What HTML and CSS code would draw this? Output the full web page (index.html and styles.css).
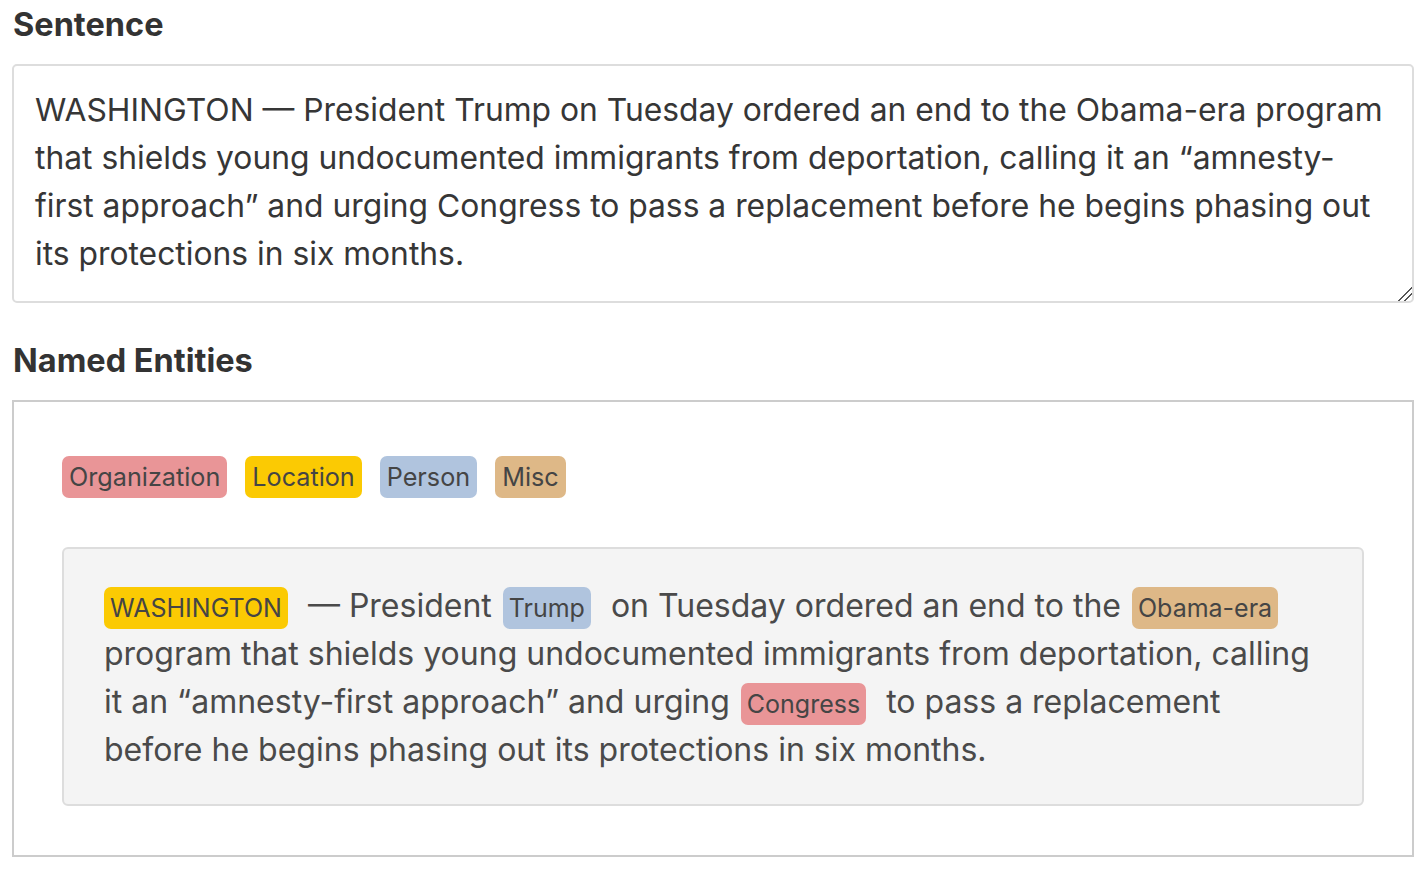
FILE: index.html
```html
<!DOCTYPE html>
<html lang="en">
<head>
<meta charset="utf-8">
<title>Named Entities</title>
<link rel="stylesheet" href="styles.css">
</head>
<body>
<main class="page">
  <h2 class="section-title">Sentence</h2>
  <textarea class="sentence-input">WASHINGTON — President Trump on Tuesday ordered an end to the Obama-era program that shields young undocumented immigrants from deportation, calling it an “amnesty-first approach” and urging Congress to pass a replacement before he begins phasing out its protections in six months.</textarea>

  <h2 class="section-title section-title--second">Named Entities</h2>
  <section class="entities">
    <div class="legend">
      <span class="tag tag--org">Organization</span>
      <span class="tag tag--loc">Location</span>
      <span class="tag tag--per">Person</span>
      <span class="tag tag--misc">Misc</span>
    </div>
    <div class="result">
      <span class="ent tag--loc">WASHINGTON</span> — President <span class="ent tag--per">Trump</span> on Tuesday ordered an end to the <span class="ent tag--misc">Obama-era</span> program that shields young undocumented immigrants from deportation, calling it an “amnesty-first approach” and urging <span class="ent tag--org">Congress</span> to pass a replacement before he begins phasing out its protections in six months.
    </div>
  </section>
</main>
</body>
</html>
```

FILE: styles.css
```css
* { box-sizing: border-box; }

html, body {
  margin: 0;
  padding: 0;
  background: #ffffff;
}

body {
  font-family: Inter, "Noto Sans", "Liberation Sans", sans-serif;
  color: #404040;
}

.page {
  padding: 0 12px;
}

.section-title {
  font-size: 32.5px;
  font-weight: 700;
  line-height: 36px;
  color: #333333;
  margin: 7px 0 21px 1px;
}

.section-title--second {
  margin-top: 40px;
}

.sentence-input {
  display: block;
  width: 100%;
  height: 239px;
  margin: 0;
  padding: 20px 24px 20px 21px;
  border: 2px solid #dddddd;
  border-radius: 5px;
  font-family: inherit;
  font-size: 31.8px;
  line-height: 48px;
  color: #363636;
  background: #ffffff;
  resize: both;
  outline: none;
}

.sentence-input::-webkit-resizer {
  background: linear-gradient(135deg,
    transparent 0 52%,
    #555555 52% 58%,
    transparent 58% 72%,
    #555555 72% 78%,
    transparent 78%);
}

.entities {
  border: 2px solid #cccccc;
  padding: 54px 48px 49px;
}

.legend {
  display: flex;
  gap: 18px;
  margin-bottom: 49px;
}

.tag {
  display: inline-block;
  height: 42px;
  padding: 0 7px;
  border-radius: 7px;
  font-size: 25.2px;
  line-height: 42px;
  color: #454545;
}

.tag--org { background: #e99597; }
.tag--loc { background: #fbca03; }
.tag--per { background: #b0c4de; }
.tag--misc { background: #deb887; }

.result {
  background: #f4f4f4;
  border: 2px solid #dddddd;
  border-radius: 6px;
  padding: 33px 40px 30px;
  font-size: 32px;
  line-height: 48px;
  color: #4a4a4a;
}

.ent {
  padding: 6px 6px;
  margin-right: 11px;
  margin-left: 2px;
  border-radius: 7px;
  font-size: 25px;
  line-height: 1;
  color: #454545;
}

.ent:first-child {
  margin-left: 0;
}
```
